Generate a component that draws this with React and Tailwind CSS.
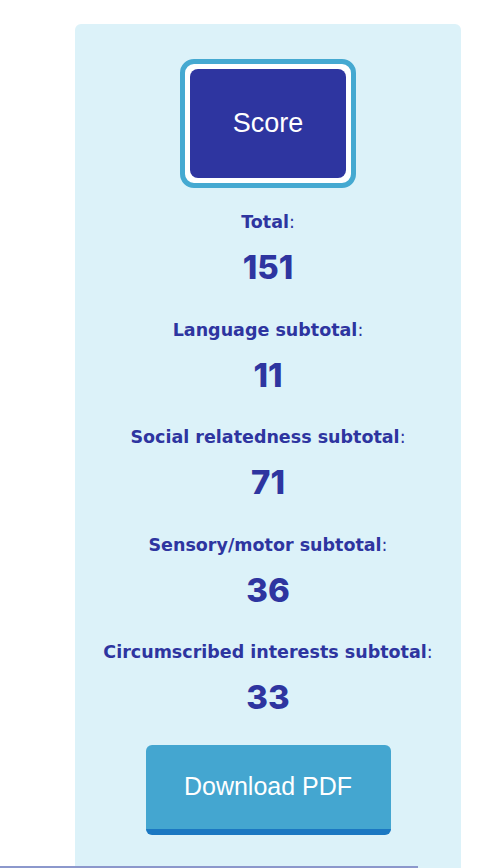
const scores = [
  { label: 'Total', value: 151 },
  { label: 'Language subtotal', value: 11 },
  { label: 'Social relatedness subtotal', value: 71 },
  { label: 'Sensory/motor subtotal', value: 36 },
  { label: 'Circumscribed interests subtotal', value: 33 },
];

export default function App() {
  return (
    <div className="relative h-[868px] w-[500px] overflow-hidden bg-white">
      <div className="ml-[75px] mt-[24px] h-[900px] w-[386px] rounded-[6px] bg-[#dcf2f9]">
        <div className="flex flex-col items-center pt-[35px]">
          <div className="rounded-[14px] border-[5px] border-[#45a9d1] bg-white p-[5px]">
            <button className="flex h-[109px] w-[156px] items-center justify-center rounded-[8px] bg-[#2e35a0] font-['Liberation_Sans',sans-serif] text-[27px] text-white">
              Score
            </button>
          </div>

          <div className="mt-[22px] flex flex-col items-center text-[#2e35a0]">
            {scores.map((s) => (
              <div key={s.label} className="flex h-[107.5px] flex-col items-center">
                <p className="font-['DejaVu_Sans',sans-serif] text-[17.5px] leading-[24px] font-bold">
                  {s.label}
                  <span className="font-normal">:</span>
                </p>
                <p className="mt-[13px] font-['Inter',sans-serif] text-[33px] leading-[40px] font-extrabold">{s.value}</p>
              </div>
            ))}
          </div>

          <button className="mt-[-3px] h-[90px] w-[245px] rounded-[6px] border-b-[6px] border-[#1b78c2] bg-[#44a6d0] font-['Liberation_Sans',sans-serif] text-[25px] text-white">
            Download PDF
          </button>
        </div>
      </div>
      <div className="absolute bottom-0 left-0 h-[2px] w-[418px] bg-[#8c98cc]" />
    </div>
  );
}
